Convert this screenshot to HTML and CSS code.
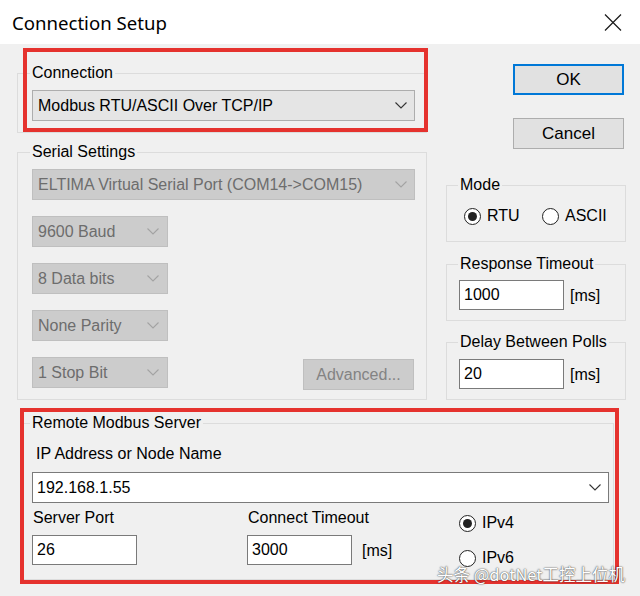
FILE: index.html
```html
<!DOCTYPE html>
<html>
<head>
<meta charset="utf-8">
<title>Connection Setup</title>
<link rel="stylesheet" href="styles.css">
</head>
<body>
<div class="window">
  <div class="titlebar">
    <span class="title">Connection Setup</span>
    <svg class="close" width="18" height="17" viewBox="0 0 18 17"><path d="M1 0.5 L17 16.5 M17 0.5 L1 16.5" stroke="#1a1a1a" stroke-width="1.2" fill="none"/></svg>
  </div>
  <div class="content">
    <div class="top">
      <div class="left">
        <fieldset class="group g-conn">
          <legend>Connection</legend>
          <div class="select">Modbus RTU/ASCII Over TCP/IP<svg class="chev" viewBox="0 0 12 7"><polyline points="0.5,0.5 6,6 11.5,0.5" fill="none" stroke="#333" stroke-width="1.1"/></svg></div>
        </fieldset>
        <fieldset class="group g-serial">
          <legend>Serial Settings</legend>
          <div class="stack">
            <div class="select disabled">ELTIMA Virtual Serial Port (COM14-&gt;COM15)<svg class="chev" viewBox="0 0 12 7"><polyline points="0.5,0.5 6,6 11.5,0.5" fill="none" stroke="#a3a3a3" stroke-width="1.1"/></svg></div>
            <div class="select disabled small">9600 Baud<svg class="chev" viewBox="0 0 12 7"><polyline points="0.5,0.5 6,6 11.5,0.5" fill="none" stroke="#a3a3a3" stroke-width="1.1"/></svg></div>
            <div class="select disabled small">8 Data bits<svg class="chev" viewBox="0 0 12 7"><polyline points="0.5,0.5 6,6 11.5,0.5" fill="none" stroke="#a3a3a3" stroke-width="1.1"/></svg></div>
            <div class="select disabled small">None Parity<svg class="chev" viewBox="0 0 12 7"><polyline points="0.5,0.5 6,6 11.5,0.5" fill="none" stroke="#a3a3a3" stroke-width="1.1"/></svg></div>
            <div class="lastrow">
              <div class="select disabled small">1 Stop Bit<svg class="chev" viewBox="0 0 12 7"><polyline points="0.5,0.5 6,6 11.5,0.5" fill="none" stroke="#a3a3a3" stroke-width="1.1"/></svg></div>
              <div class="btn adv">Advanced...</div>
            </div>
          </div>
        </fieldset>
      </div>
      <div class="right">
        <div class="btn ok">OK</div>
        <div class="btn cancel">Cancel</div>
        <fieldset class="group rgroup g-mode">
          <legend>Mode</legend>
          <div class="radios">
            <span class="radio"><span class="dot on"></span>RTU</span>
            <span class="radio"><span class="dot"></span>ASCII</span>
          </div>
        </fieldset>
        <fieldset class="group rgroup g-resp">
          <legend>Response Timeout</legend>
          <div class="field"><div class="input">1000</div><span class="unit">[ms]</span></div>
        </fieldset>
        <fieldset class="group rgroup g-delay">
          <legend>Delay Between Polls</legend>
          <div class="field"><div class="input">20</div><span class="unit">[ms]</span></div>
        </fieldset>
      </div>
    </div>
    <fieldset class="group g-remote">
      <legend>Remote Modbus Server</legend>
      <div class="lbl-ip">IP Address or Node Name</div>
      <div class="select ip">192.168.1.55<svg class="chev" viewBox="0 0 12 7"><polyline points="0.5,0.5 6,6 11.5,0.5" fill="none" stroke="#333" stroke-width="1.1"/></svg></div>
      <div class="bottomrow">
        <div class="col">
          <div class="lbl">Server Port</div>
          <div class="field"><div class="input">26</div></div>
        </div>
        <div class="col">
          <div class="lbl">Connect Timeout</div>
          <div class="field"><div class="input">3000</div><span class="unit wide">[ms]</span></div>
        </div>
        <div class="col3">
          <span class="radio"><span class="dot on"></span>IPv4</span>
          <span class="radio tight"><span class="dot"></span>IPv6</span>
        </div>
      </div>
    </fieldset>
  </div>
  <div class="mark mark1"></div>
  <div class="mark mark2"></div>
  <div class="watermark">头条 @dotNet工控上位机</div>
</div>
</body>
</html>
```
FILE: styles.css
```css
* { box-sizing: border-box; }
html, body { margin: 0; padding: 0; }
body {
  width: 640px;
  height: 596px;
  overflow: hidden;
  background: #f0f0f0;
  font-family: "Liberation Sans", Arial, sans-serif;
  font-size: 16px;
  color: #000;
}
.window { position: relative; width: 640px; height: 596px; }

.titlebar {
  height: 44px;
  background: #fff;
  display: flex;
  align-items: center;
  justify-content: space-between;
  padding: 1px 18px 0 12px;
}
.title { font-family: "Noto Sans", sans-serif; font-size: 18.6px; }
.close { display: block; }

.content { padding: 20px 0 0 17px; }
.top { display: flex; gap: 19px; }
.left { width: 410px; display: flex; flex-direction: column; }
.right { width: 180px; display: flex; flex-direction: column; }

.group { margin: 0; border: 1px solid #dcdcdc; min-width: 0; }
.group legend { padding: 0 2px; line-height: 18px; height: 18px; }

.g-conn { padding: 8px 11px 11px 14px; }
.g-conn legend, .g-serial legend, .g-remote legend { margin-left: -2px; }
.g-serial { margin-top: 10px; padding: 8px 11px 9px 14px; }
.stack { display: flex; flex-direction: column; gap: 16px; }
.lastrow { display: flex; justify-content: space-between; align-items: flex-start; }

.select {
  height: 31px;
  display: flex;
  align-items: center;
  justify-content: space-between;
  padding: 0 7px 0 5px;
  border: 1px solid #adadad;
  background: #e5e5e5;
  white-space: nowrap;
}
.chev { width: 12px; height: 7px; flex: none; }
.select.disabled { background: #cccccc; border-color: #bfbfbf; color: #6d6d6d; }
.select.small { width: 136px; padding-right: 8px; }
.select.ip { background: #fff; border-color: #7a7a7a; margin-top: 9px; padding-left: 4px; }

.btn {
  height: 31px;
  display: flex;
  align-items: center;
  justify-content: center;
  background: #e1e1e1;
  border: 1px solid #adadad;
}
.btn.ok { width: 111px; align-self: flex-end; margin-right: 2px; border: 2px solid #0078d7; font-size: 17px; }
.btn.cancel { width: 111px; align-self: flex-end; margin-right: 2px; margin-top: 23px; font-size: 17px; }
.btn.adv { width: 111px; margin-top: 2px; margin-right: 1px; background: #cccccc; border-color: #bfbfbf; color: #838383; }

.rgroup { padding-left: 12px; padding-right: 10px; }
.rgroup legend { margin-left: -1px; }
.g-mode { margin-top: 27px; padding-top: 12px; padding-bottom: 15px; }
.g-resp { margin-top: 13px; padding-top: 7px; padding-bottom: 10px; }
.g-delay { margin-top: 12px; padding-top: 8px; padding-bottom: 10px; }

.radios { display: grid; grid-template-columns: 78px auto; padding-left: 5px; }
.radio { display: inline-flex; align-items: center; gap: 6px; height: 20px; line-height: 18px; }
.radio.tight { line-height: 16px; height: 16px; margin-top: 2px; }
.dot {
  width: 17px;
  height: 17px;
  border: 1px solid #222;
  border-radius: 50%;
  background: #fff;
  display: flex;
  align-items: center;
  justify-content: center;
  flex: none;
}
.dot.on::after { content: ""; width: 9px; height: 9px; border-radius: 50%; background: #222; }

.field { display: flex; align-items: center; }
.input {
  width: 105px;
  height: 30px;
  background: #fff;
  border: 1px solid #7a7a7a;
  display: flex;
  align-items: center;
  padding-left: 4px;
}
.unit { margin-left: 6px; padding-top: 2px; }
.unit.wide { margin-left: 10px; }

.g-remote { margin: 14px 0 0 5px; width: 592px; padding: 0 4px 13px 9px; }
.lbl-ip { margin-top: 13px; padding-left: 4px; line-height: 18px; }
.bottomrow { margin-top: 6px; display: grid; grid-template-columns: 215px 212px 1fr; }
.col .lbl { line-height: 18px; padding-left: 1px; }
.col .field { margin-top: 8px; }
.col3 { display: flex; flex-direction: column; align-items: flex-start; gap: 15px; margin-top: 4px; }

.mark { position: absolute; border: 4px solid #e5322e; }
.mark1 { left: 23px; top: 48px; width: 405px; height: 84px; }
.mark2 { left: 20px; top: 408px; width: 599px; height: 176px; }

.watermark {
  position: absolute;
  left: 437px;
  top: 566px;
  font-family: "Noto Sans CJK SC", sans-serif;
  font-size: 16.5px;
  line-height: 16px;
  color: #fff;
  text-shadow: 0 0 1px #444, 0 0 2px rgba(0,0,0,.6);
  white-space: nowrap;
}
```
